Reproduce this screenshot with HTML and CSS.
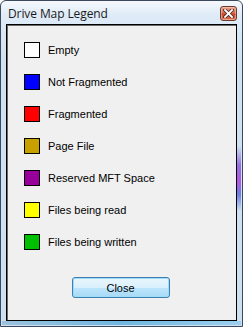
FILE: index.html
```html
<!DOCTYPE html>
<html lang="en">
<head>
  <meta charset="UTF-8">
  <title>Drive Map Legend</title>
  <link rel="stylesheet" href="styles.css">
</head>
<body>
  <div class="window">
    <div class="titlebar">
      <span class="title">Drive Map Legend</span>
      <div class="close-x">
        <svg width="11" height="9" viewBox="0 0 11 9">
          <path d="M2 1 L9 8 M9 1 L2 8" stroke="#4a2a22" stroke-width="3.4" stroke-linecap="square"/>
          <path d="M2 1 L9 8 M9 1 L2 8" stroke="#ffffff" stroke-width="1.8" stroke-linecap="square"/>
        </svg>
      </div>
    </div>
    <div class="client">
      <div class="legend">
        <div class="legend-item"><span class="swatch empty"></span><span>Empty</span></div>
        <div class="legend-item"><span class="swatch not-frag"></span><span>Not Fragmented</span></div>
        <div class="legend-item"><span class="swatch frag"></span><span>Fragmented</span></div>
        <div class="legend-item"><span class="swatch page"></span><span>Page File</span></div>
        <div class="legend-item"><span class="swatch mft"></span><span>Reserved MFT Space</span></div>
        <div class="legend-item"><span class="swatch reading"></span><span>Files being read</span></div>
        <div class="legend-item"><span class="swatch writing"></span><span>Files being written</span></div>
      </div>
      <div class="button-row">
        <button class="btn">Close</button>
      </div>
    </div>
  </div>
</body>
</html>
```

FILE: styles.css
```css
html, body {
  margin: 0;
  padding: 0;
}

body {
  width: 243px;
  height: 327px;
  overflow: hidden;
  font-family: "Liberation Sans", Arial, sans-serif;
  font-size: 11px;
  color: #000;
}

.window {
  box-sizing: border-box;
  width: 243px;
  height: 327px;
  border: 1px solid #3a4a5c;
  border-radius: 6px 6px 0 0;
  background: linear-gradient(to bottom, #f6f9fd 0px, #dfebf7 14px, #d0e1f2 60px, #cde0f2 100%);
  display: flex;
  flex-direction: column;
  padding: 0 5px 5px 5px;
  position: relative;
}

.window::after {
  content: "";
  position: absolute;
  right: 1px;
  top: 145px;
  width: 4px;
  height: 65px;
  background: linear-gradient(to bottom, rgba(160, 120, 230, 0) 0%, #8a5be0 30%, #b03ee0 55%, #5a6fe0 75%, rgba(120, 150, 230, 0) 100%);
  opacity: 0.85;
}

.window::before {
  content: "";
  position: absolute;
  left: 1px;
  right: 1px;
  bottom: 1px;
  height: 4px;
  background: linear-gradient(to right, #9cc3df, #6fb7e0 50%, #9cd0ee);
}

.titlebar {
  height: 23px;
  display: flex;
  align-items: center;
  justify-content: space-between;
  padding-left: 2px;
}

.title {
  font-family: "Open Sans", "DejaVu Sans", sans-serif;
  font-size: 12px;
  color: #1b1b1b;
  letter-spacing: -0.1px;
  margin-top: 2px;
}

.close-x {
  width: 15px;
  height: 13px;
  margin-top: 1px;
  border: 1px solid #6b3a2c;
  border-radius: 3px;
  background: linear-gradient(to bottom, #eba391 0%, #d9694e 45%, #c8432a 55%, #dc7757 100%);
  display: flex;
  align-items: center;
  justify-content: center;
  box-shadow: inset 0 0 0 1px rgba(255, 220, 200, 0.45);
}

.client {
  flex: 1;
  border: 1px solid #000;
  box-shadow: inset 1px 1px 0 #696969;
  background-color: #f0f0f0;
  display: flex;
  flex-direction: column;
}

.legend {
  display: flex;
  flex-direction: column;
  gap: 16px;
  padding: 17px 0 0 17px;
}

.legend-item {
  display: flex;
  align-items: center;
  height: 16px;
  gap: 8px;
}

.swatch {
  box-sizing: border-box;
  width: 16px;
  height: 16px;
  border: 1px solid #000;
}

.empty { background-color: #ffffff; }
.not-frag { background-color: #0000ff; }
.frag { background-color: #ff0000; }
.page { background-color: #c8a000; }
.mft { background-color: #990099; }
.reading { background-color: #ffff00; }
.writing { background-color: #00c000; }

.button-row {
  display: flex;
  justify-content: center;
  margin-top: 27px;
  padding-right: 2px;
}

.btn {
  box-sizing: border-box;
  width: 98px;
  height: 21px;
  border: 1px solid #3c7fb1;
  border-radius: 3px;
  background: linear-gradient(to bottom, #eaf6fd 0%, #d9f0fc 50%, #bee6fd 51%, #a7d9f5 100%);
  box-shadow: inset 0 0 0 1px #9fdcf8;
  font-family: "Liberation Sans", Arial, sans-serif;
  font-size: 11px;
  color: #000;
  padding: 0;
}
```
